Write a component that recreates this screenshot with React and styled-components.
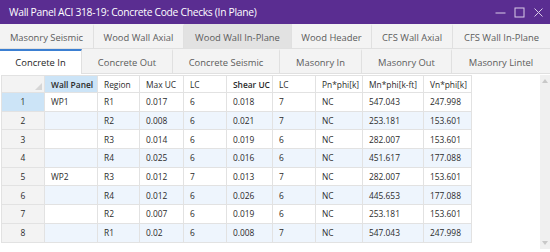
import React from 'react'
import styled, { createGlobalStyle } from 'styled-components'

const GlobalStyle = createGlobalStyle`
  html, body {
    margin: 0;
    padding: 0;
    background: #ffffff;
    font-family: "Open Sans", "Noto Sans", sans-serif;
  }
`

const Window = styled.div`
  width: 550px;
  height: 252px;
  display: flex;
  flex-direction: column;
  background: #ffffff;
  overflow: hidden;
`

const TitleBar = styled.header`
  height: 24px;
  flex: none;
  display: flex;
  align-items: center;
  padding-left: 9px;
  background: #5a2d91;
  color: #ffffff;
  font-size: 10.3px;
  letter-spacing: -0.3px;
`

const Controls = styled.div`
  margin-left: auto;
  display: flex;
  align-items: center;
  gap: 8px;
  padding-right: 6px;
  & svg {
    display: block;
  }
`

const TabRow = styled.nav`
  height: 25px;
  flex: none;
  display: flex;
  background: #f3f3f3;
  border-bottom: 1px solid #e0e0e0;
  box-sizing: border-box;
`

const Tab = styled.div`
  width: ${(p) => p.$w}px;
  flex: none;
  box-sizing: border-box;
  display: flex;
  align-items: center;
  justify-content: center;
  font-size: 9.4px;
  color: ${(p) => (p.$active ? '#1f1f1f' : '#5c5c5c')};
  background: ${(p) => (p.$active ? '#ffffff' : p.$hover ? '#e2e2e2' : '#f3f3f3')};
  border-right: 1px solid #e0e0e0;
  border-top: 2px solid ${(p) => (p.$active ? '#3b7fd2' : 'transparent')};
  margin-bottom: ${(p) => (p.$active ? '-1px' : '0')};
  &:last-child {
    border-right: none;
  }
`

const Content = styled.main`
  flex: 1;
  display: flex;
  padding: 1px 0 0 1px;
`

const Table = styled.div`
  display: grid;
  grid-template-columns: 43px 53px 42px 44px 43px 46px 43px 47px 61px 48px;
  grid-template-rows: 17px repeat(8, 18.7px);
  align-self: flex-start;
  border-top: 1px solid #e2e2e2;
  border-left: 1px solid #e2e2e2;
`

const Cell = styled.div`
  box-sizing: border-box;
  display: flex;
  align-items: center;
  justify-content: ${(p) => (p.$center ? 'center' : 'flex-start')};
  padding-left: ${(p) => (p.$center ? '0' : '6px')};
  border-right: 1px solid #e2e2e2;
  border-bottom: 1px solid #e2e2e2;
  background: ${(p) => p.$bg || '#ffffff'};
  font-size: 8.4px;
  font-weight: ${(p) => (p.$bold ? 600 : 400)};
  color: #2b2b2b;
  white-space: nowrap;
  overflow: hidden;
`

const Corner = styled(Cell)`
  background: #f3f3f3;
  align-items: flex-end;
  justify-content: flex-end;
  padding: 0 2px 2px 0;
  & svg {
    display: block;
  }
`

const Scrollbar = styled.div`
  margin-left: auto;
  width: 10px;
  height: 174px;
  background: #f0f0f0;
  display: flex;
  flex-direction: column;
  justify-content: space-between;
  align-items: center;
  padding: 4px 0;
  box-sizing: border-box;
  & svg {
    display: block;
  }
`

const tabsTop = [
  ['Masonry Seismic', 94],
  ['Wood Wall Axial', 90],
  ['Wood Wall In-Plane', 108, 'hover'],
  ['Wood Header', 80],
  ['CFS Wall Axial', 81],
  ['CFS Wall In-Plane', 97],
]

const tabsBottom = [
  ['Concrete In', 82, 'active'],
  ['Concrete Out', 91],
  ['Concrete Seismic', 107],
  ['Masonry In', 82],
  ['Masonry Out', 90],
  ['Masonry Lintel', 98],
]

const headers = [
  ['Wall Panel', true],
  ['Region'],
  ['Max UC'],
  ['LC'],
  ['Shear UC', true],
  ['LC'],
  ['Pn*phi[k]'],
  ['Mn*phi[k-ft]'],
  ['Vn*phi[k]'],
]

const rows = [
  ['WP1', 'R1', '0.017', '6', '0.018', '7', 'NC', '547.043', '247.998'],
  ['', 'R2', '0.008', '6', '0.021', '7', 'NC', '253.181', '153.601'],
  ['', 'R3', '0.014', '6', '0.019', '6', 'NC', '282.007', '153.601'],
  ['', 'R4', '0.025', '6', '0.016', '6', 'NC', '451.617', '177.088'],
  ['WP2', 'R3', '0.012', '7', '0.013', '7', 'NC', '282.007', '153.601'],
  ['', 'R4', '0.012', '6', '0.026', '6', 'NC', '445.653', '177.088'],
  ['', 'R2', '0.007', '6', '0.019', '6', 'NC', '253.181', '153.601'],
  ['', 'R1', '0.02', '6', '0.008', '7', 'NC', '547.043', '247.998'],
]

const SELECTED = '#cce4f7'
const STRIPE = '#eef5fd'

export default function App() {
  return (
    <>
      <GlobalStyle />
      <Window>
        <TitleBar>
          Wall Panel ACI 318-19: Concrete Code Checks (In Plane)
          <Controls>
            <svg width="11" height="11" viewBox="0 0 11 11">
              <line x1="0.5" y1="6" x2="10.5" y2="6" stroke="#d9cce8" strokeWidth="1" />
            </svg>
            <svg width="11" height="11" viewBox="0 0 11 11">
              <rect x="1" y="1" width="9" height="9" fill="none" stroke="#d9cce8" strokeWidth="1" />
            </svg>
            <svg width="11" height="11" viewBox="0 0 11 11">
              <path d="M1.5 1.5 L9.5 9.5 M9.5 1.5 L1.5 9.5" stroke="#d9cce8" strokeWidth="1" />
            </svg>
          </Controls>
        </TitleBar>

        <TabRow>
          {tabsTop.map(([label, w, state]) => (
            <Tab key={label} $w={w} $hover={state === 'hover'}>
              {label}
            </Tab>
          ))}
        </TabRow>
        <TabRow>
          {tabsBottom.map(([label, w, state]) => (
            <Tab key={label} $w={w} $active={state === 'active'}>
              {label}
            </Tab>
          ))}
        </TabRow>

        <Content>
          <Table>
            <Corner>
              <svg width="7" height="7" viewBox="0 0 7 7">
                <polygon points="7,0 7,7 0,7" fill="#d6d6d6" />
              </svg>
            </Corner>
            {headers.map(([label, bold], i) => (
              <Cell key={'h' + i} $bold={bold} $bg={i === 0 ? SELECTED : '#ffffff'}>
                {label}
              </Cell>
            ))}
            {rows.map((row, r) => {
              const bg = r % 2 === 1 ? STRIPE : '#ffffff'
              return (
                <React.Fragment key={r}>
                  <Cell $center $bg={r === 0 ? SELECTED : '#f3f3f3'}>
                    {r + 1}
                  </Cell>
                  {row.map((v, c) => (
                    <Cell key={c} $bg={bg}>
                      {v}
                    </Cell>
                  ))}
                </React.Fragment>
              )
            })}
          </Table>
          <Scrollbar>
            <svg width="6" height="4" viewBox="0 0 6 4">
              <polygon points="3,0 6,4 0,4" fill="#c8c8c8" />
            </svg>
            <svg width="6" height="4" viewBox="0 0 6 4">
              <polygon points="0,0 6,0 3,4" fill="#c8c8c8" />
            </svg>
          </Scrollbar>
        </Content>
      </Window>
    </>
  )
}
